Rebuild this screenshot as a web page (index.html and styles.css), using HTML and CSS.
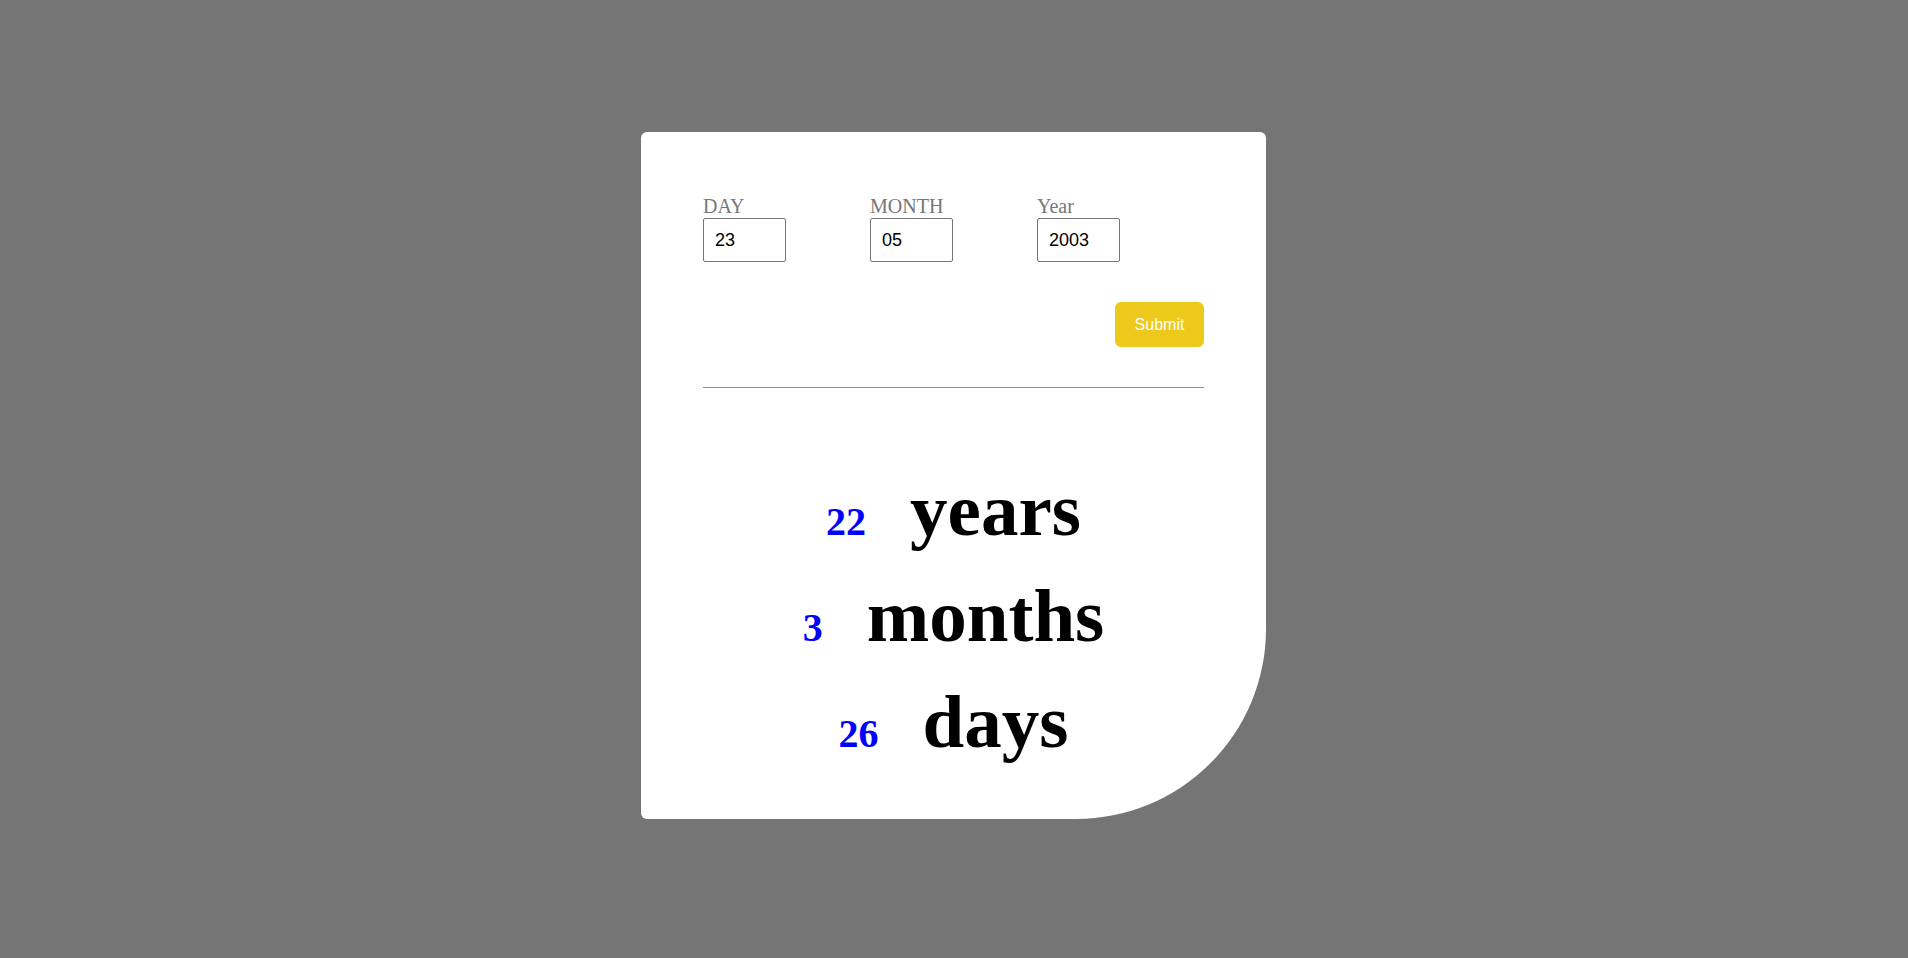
FILE: index.html
```html
<!DOCTYPE html>
<html lang="en">
<head>
  <meta charset="UTF-8" />
  <meta name="viewport" content="width=device-width, initial-scale=1" />
  <title>Age Calculator</title>
  <link rel="stylesheet" href="styles.css">
</head>

<body>
  <!-- CARD -->
  <main class="card">
    <!-- DATE INPUTS -->
    <form class="date-form" onsubmit="return false;">
      <div class="fields">
        <div class="field">
          <label for="day">DAY</label>
          <input id="day" type="text" value="23" />
        </div>
        <div class="field">
          <label for="month">MONTH</label>
          <input id="month" type="text" value="05" />
        </div>
        <div class="field">
          <label for="year">Year</label>
          <input id="year" type="text" value="2003" />
        </div>
      </div>
      <div class="actions">
        <button type="submit" class="submit-btn">Submit</button>
      </div>
    </form>

    <hr class="divider" />

    <!-- RESULT -->
    <section class="result">
      <div class="result-row"><span class="num">22</span><span class="unit">years</span></div>
      <div class="result-row"><span class="num">3</span><span class="unit">months</span></div>
      <div class="result-row"><span class="num">26</span><span class="unit">days</span></div>
    </section>
  </main>
</body>
</html>
```

FILE: styles.css
```css
/* ———————————————————————————————— */
/* BASE */
/* ———————————————————————————————— */
html, body { height: 100%; }
body {
  margin: 0;
  padding: 132px 1px 0 0;           /* nudge card onto whole pixels */
  box-sizing: border-box;
  background: #757575;
  display: flex;
  justify-content: center;
  align-items: flex-start;
  font-family: "Liberation Serif", "Times New Roman", serif;
}

/* CARD */
.card {
  width: 625px;
  box-sizing: border-box;
  padding: 63px 62px 44px;
  background: #fff;
  border-radius: 6px 6px 190px 6px;
}

/* ———————————————————————————————— */
/* FORM */
/* ———————————————————————————————— */
.date-form { margin: 0; }
.fields {
  display: grid;
  grid-template-columns: repeat(3, 1fr);
}
.field label {
  display: block;
  font-size: 20px;
  line-height: 23px;
  color: #777;
}
.field input {
  display: block;
  width: 83px;
  height: 44px;
  box-sizing: border-box;
  margin: 0;
  padding: 0 11px;
  border: 1px solid #767676;
  border-radius: 2px;
  font-family: "Liberation Sans", Arial, sans-serif;
  font-size: 18px;
  color: #000;
  background: #fff;
}

.actions {
  display: flex;
  justify-content: flex-end;
  margin-top: 40px;
}
.submit-btn {
  width: 89px;
  height: 45px;
  border: none;
  border-radius: 6px;
  background: #ecc91b;
  color: #fff;
  font-family: "Liberation Sans", Arial, sans-serif;
  font-size: 16px;
  cursor: pointer;
}

.divider {
  margin: 40px 0 0;
  border: 0;
  border-top: 1px solid #8f8f8f;
}

/* ———————————————————————————————— */
/* RESULT */
/* ———————————————————————————————— */
.result { margin-top: 69px; }
.result-row {
  display: flex;
  justify-content: center;
  align-items: baseline;
  gap: 44px;
  font-weight: 700;
}
.num {
  font-size: 40px;
  line-height: normal;
  color: #00f;
}
.unit {
  font-size: 75px;
  line-height: 106px;
  color: #000;
}
```
